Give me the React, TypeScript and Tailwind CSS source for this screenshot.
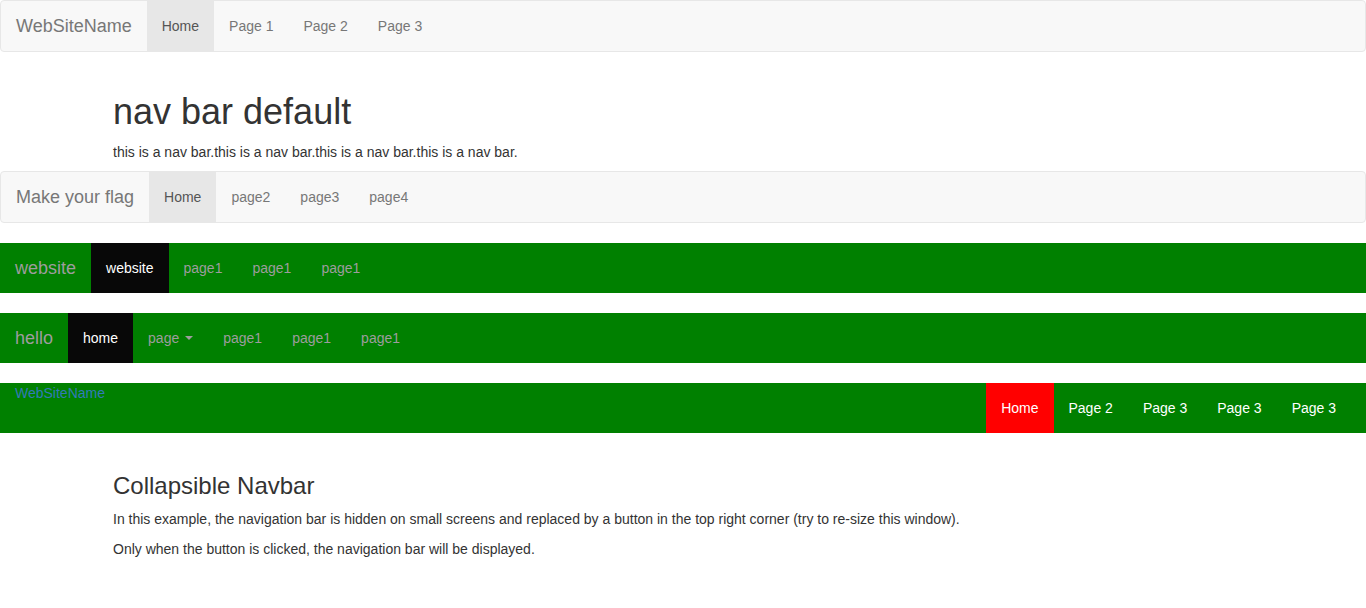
const font = { fontFamily: '"Liberation Sans", Arial, Helvetica, sans-serif' };

type Item = { label: string; active?: boolean; caret?: boolean };

function LightNavbar({ brand, items }: { brand: string; items: Item[] }) {
  return (
    <nav className="flex min-h-[50px] border border-[#e7e7e7] bg-[#f8f8f8] rounded-[4px] mb-[20px]">
      <a className="block h-[50px] px-[15px] py-[15px] text-[18px] leading-[20px] text-[#777]">{brand}</a>
      <ul className="flex">
        {items.map((it, i) => (
          <li key={i}>
            <a
              className={
                it.active
                  ? "block px-[15px] py-[15px] text-[14px] leading-[20px] bg-[#e7e7e7] text-[#555]"
                  : "block px-[15px] py-[15px] text-[14px] leading-[20px] text-[#777]"
              }
            >
              {it.label}
            </a>
          </li>
        ))}
      </ul>
    </nav>
  );
}

function GreenNavbar({ brand, items }: { brand: string; items: Item[] }) {
  return (
    <nav className="flex min-h-[50px] bg-[#008000] mb-[20px]">
      <a className="block h-[50px] px-[15px] py-[15px] text-[18px] leading-[20px] text-[#9d9d9d]">{brand}</a>
      <ul className="flex">
        {items.map((it, i) => (
          <li key={i}>
            <a
              className={
                it.active
                  ? "flex items-center px-[15px] py-[15px] text-[14px] leading-[20px] bg-[#080808] text-white"
                  : "flex items-center px-[15px] py-[15px] text-[14px] leading-[20px] text-[#9d9d9d]"
              }
            >
              {it.label}
              {it.caret && (
                <span className="inline-block ml-[6px] w-0 h-0 border-t-[4px] border-t-[#9d9d9d] border-x-[4px] border-x-transparent" />
              )}
            </a>
          </li>
        ))}
      </ul>
    </nav>
  );
}

function RightNavbar() {
  const items = ["Home", "Page 2", "Page 3", "Page 3", "Page 3"];
  return (
    <nav className="flex justify-between h-[50px] bg-[#008000] pl-[15px] pr-[15px]">
      <a className="block text-[14px] leading-[20px] text-[#337ab7]">WebSiteName</a>
      <ul className="flex">
        {items.map((label, i) => (
          <li key={i}>
            <a
              className={
                i === 0
                  ? "block px-[15px] py-[15px] text-[14px] leading-[20px] bg-[#ff0000] text-white"
                  : "block px-[15px] py-[15px] text-[14px] leading-[20px] text-white"
              }
            >
              {label}
            </a>
          </li>
        ))}
      </ul>
    </nav>
  );
}

export default function App() {
  return (
    <div className="min-h-screen bg-white text-[#333] text-[14px] leading-[20px]" style={font}>
      <LightNavbar
        brand="WebSiteName"
        items={[{ label: "Home", active: true }, { label: "Page 1" }, { label: "Page 2" }, { label: "Page 3" }]}
      />
      <div className="w-[1170px] mx-auto px-[15px]">
        <h1 className="text-[36px] leading-[1.1] mt-[40px] mb-[10px]">nav bar default</h1>
        <p className="mb-[9px]">this is a nav bar.this is a nav bar.this is a nav bar.this is a nav bar.</p>
      </div>
      <LightNavbar
        brand="Make your flag"
        items={[{ label: "Home", active: true }, { label: "page2" }, { label: "page3" }, { label: "page4" }]}
      />
      <GreenNavbar
        brand="website"
        items={[{ label: "website", active: true }, { label: "page1" }, { label: "page1" }, { label: "page1" }]}
      />
      <GreenNavbar
        brand="hello"
        items={[
          { label: "home", active: true },
          { label: "page", caret: true },
          { label: "page1" },
          { label: "page1" },
          { label: "page1" },
        ]}
      />
      <RightNavbar />
      <div className="w-[1170px] mx-auto px-[15px] pt-[40px]">
        <h3 className="text-[24px] leading-[1.1] mb-[10px]">Collapsible Navbar</h3>
        <p className="mb-[10px]">
          In this example, the navigation bar is hidden on small screens and replaced by a button in the top right corner (try to re-size this window).
        </p>
        <p className="mb-[10px]">Only when the button is clicked, the navigation bar will be displayed.</p>
      </div>
    </div>
  );
}
